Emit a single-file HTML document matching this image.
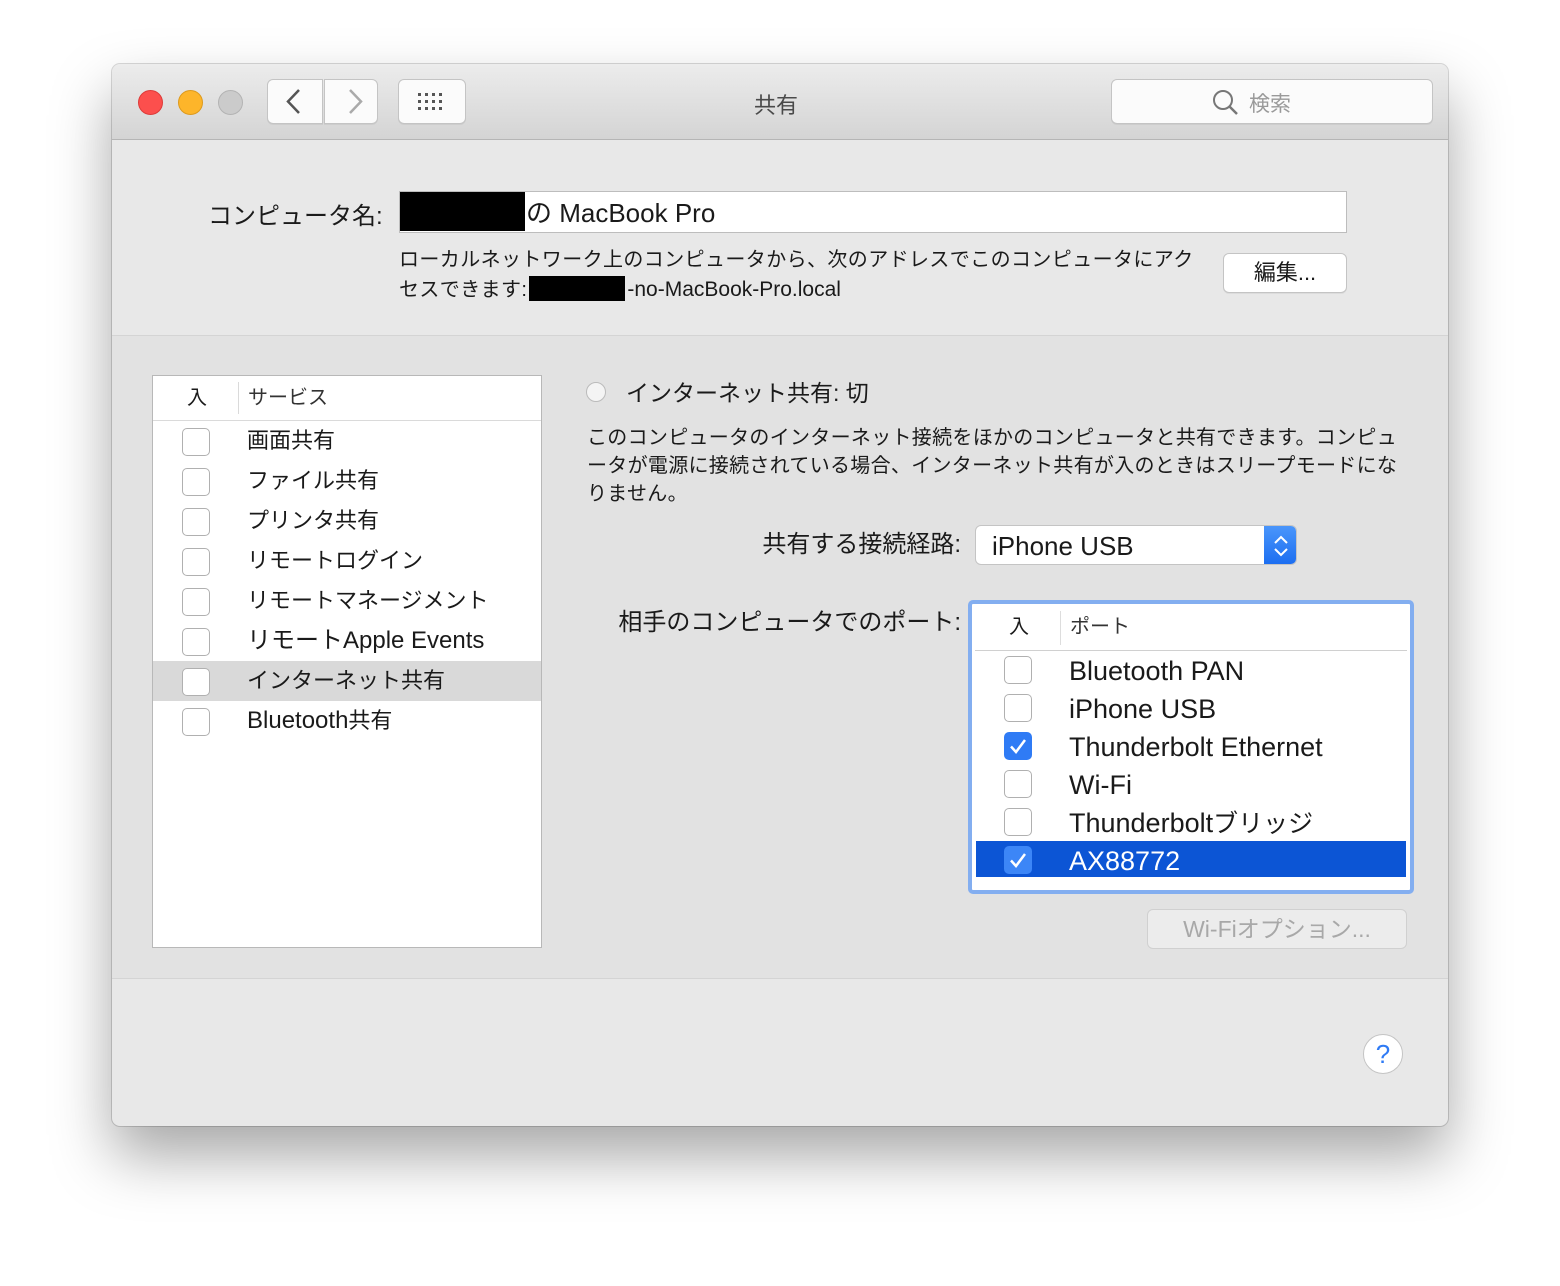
<!DOCTYPE html>
<html><head><meta charset="utf-8"><style>
*{margin:0;padding:0;box-sizing:border-box}
body{width:1560px;height:1286px;background:#fff;position:relative;overflow:hidden;font-family:"Liberation Sans","Noto Sans CJK JP",sans-serif;color:#1a1a1a}
.a{position:absolute}
.win{left:112px;top:64px;width:1336px;height:1062px;background:#e8e8e8;border-radius:8px;box-shadow:0 30px 60px rgba(0,0,0,.35),0 0 0 1px rgba(0,0,0,.15);overflow:hidden}
.tb{left:0;top:0;width:1336px;height:76px;background:linear-gradient(#ececec,#d4d4d4);border-bottom:1px solid #b5b5b5}
.dot{width:25px;height:25px;border-radius:50%;top:26px}
.btn{background:#fbfbfb;border:1px solid #c4c4c4;border-radius:6px;box-shadow:0 1px 0 rgba(0,0,0,.05)}
.cb{width:28px;height:28px;border:1px solid #b0b0b0;border-radius:5px;background:#fff}
.cbc{width:28px;height:28px;border-radius:5px;background:#2f7bf5}
.l{font-size:22px;line-height:30px;left:135px}
.p{font-size:27px;line-height:30px;left:957px}
</style></head><body>
<div class="a win">
 <div class="a tb">
  <div class="a dot" style="left:26px;background:#fc4f4d;border:1px solid #dd3b39"></div>
  <div class="a dot" style="left:66px;background:#fdb52a;border:1px solid #dd9a1d"></div>
  <div class="a dot" style="left:106px;background:#cbcbcb;border:1px solid #b3b3b3"></div>
  <div class="a btn" style="left:155px;top:15px;width:56px;height:45px;border-radius:6px 0 0 6px"></div>
  <div class="a btn" style="left:212px;top:15px;width:54px;height:45px;border-radius:0 6px 6px 0"></div>
  <svg class="a" style="left:155px;top:15px" width="112" height="45"><path d="M32 11 L21 22.5 L32 34" stroke="#555" stroke-width="2.5" fill="none"/><path d="M83 11 L94 22.5 L83 34" stroke="#aaa" stroke-width="2.5" fill="none"/></svg>
  <div class="a btn" style="left:286px;top:15px;width:68px;height:45px"></div>
  <svg class="a" style="left:306px;top:29px" width="30" height="20"><g fill="#555"><rect x="0" y="0" width="3" height="3"/><rect x="7" y="0" width="3" height="3"/><rect x="14" y="0" width="3" height="3"/><rect x="21" y="0" width="3" height="3"/><rect x="0" y="7" width="3" height="3"/><rect x="7" y="7" width="3" height="3"/><rect x="14" y="7" width="3" height="3"/><rect x="21" y="7" width="3" height="3"/><rect x="0" y="14" width="3" height="3"/><rect x="7" y="14" width="3" height="3"/><rect x="14" y="14" width="3" height="3"/><rect x="21" y="14" width="3" height="3"/></g></svg>
  <div class="a" style="left:642px;top:24px;font-size:22px;color:#4a4a4a">共有</div>
  <div class="a btn" style="left:999px;top:15px;width:322px;height:45px"></div>
  <svg class="a" style="left:1100px;top:25px" width="28" height="28"><circle cx="11" cy="11" r="9" stroke="#777" stroke-width="2" fill="none"/><path d="M17.5 17.5 L25 25" stroke="#777" stroke-width="2.5"/></svg>
  <div class="a" style="left:1137px;top:24px;font-size:21px;color:#9a9a9a">検索</div>
 </div>
 <div class="a" style="left:96px;top:132px;font-size:24px">コンピュータ名:</div>
 <div class="a" style="left:287px;top:127px;width:948px;height:42px;background:#fff;border:1px solid #bdbdbd"></div>
 <div class="a" style="left:288px;top:128px;width:125px;height:39px;background:#000"></div>
 <div class="a" style="left:414px;top:134px;font-size:26px;line-height:30px">の MacBook Pro</div>
 <div class="a" style="left:287px;top:182px;font-size:20px;line-height:29px;letter-spacing:.4px">ローカルネットワーク上のコンピュータから、次のアドレスでこのコンピュータにアク<br>セスできます:<span style="display:inline-block;width:96px;height:25px;background:#000;vertical-align:-5px;margin:0 2px"></span><span style="font-size:21px;letter-spacing:0">-no-MacBook-Pro.local</span></div>
 <div class="a btn" style="left:1111px;top:189px;width:124px;height:40px;text-align:center;font-size:22px;line-height:38px;background:#fff">編集...</div>
 <div class="a" style="left:0;top:271px;width:1336px;height:644px;background:#e2e2e2;border-top:1px solid #d4d4d4;border-bottom:1px solid #d4d4d4"></div>
 <div class="a" style="left:40px;top:311px;width:390px;height:573px;background:#fff;border:1px solid #b8b8b8"></div>
 <div class="a" style="left:41px;top:312px;width:388px;height:45px;border-bottom:1px solid #dadada"></div>
 <div class="a" style="left:126px;top:318px;width:1px;height:32px;background:#dadada"></div>
 <div class="a" style="left:75px;top:320px;font-size:20px;line-height:28px">入</div>
 <div class="a" style="left:136px;top:320px;font-size:20px;line-height:28px;color:#333">サービス</div>
 <div class="a" style="left:41px;top:597px;width:388px;height:40px;background:#d9d9d9"></div>
 <div class="a cb" style="left:70px;top:364px"></div><div class="a l" style="top:362px">画面共有</div>
 <div class="a cb" style="left:70px;top:404px"></div><div class="a l" style="top:402px">ファイル共有</div>
 <div class="a cb" style="left:70px;top:444px"></div><div class="a l" style="top:442px">プリンタ共有</div>
 <div class="a cb" style="left:70px;top:484px"></div><div class="a l" style="top:482px">リモートログイン</div>
 <div class="a cb" style="left:70px;top:524px"></div><div class="a l" style="top:522px">リモートマネージメント</div>
 <div class="a cb" style="left:70px;top:564px"></div><div class="a l" style="top:562px"><span style="font-size:24px">リモートApple Events</span></div>
 <div class="a cb" style="left:70px;top:604px"></div><div class="a l" style="top:602px">インターネット共有</div>
 <div class="a cb" style="left:70px;top:644px"></div><div class="a l" style="top:642px"><span style="font-size:24px">Bluetooth</span>共有</div>
 <div class="a" style="left:474px;top:318px;width:20px;height:20px;border-radius:50%;border:1px solid #bbb;background:#f4f4f4"></div>
 <div class="a" style="left:514px;top:314px;font-size:23px;line-height:30px">インターネット共有: 切</div>
 <div class="a" style="left:475px;top:360px;font-size:20px;line-height:28px;width:850px;letter-spacing:.3px">このコンピュータのインターネット接続をほかのコンピュータと共有できます。コンピュ<br>ータが電源に接続されている場合、インターネット共有が入のときはスリープモードにな<br>りません。</div>
 <div class="a" style="left:400px;width:449px;text-align:right;top:466px;font-size:24px;line-height:30px">共有する接続経路:</div>
 <div class="a" style="left:863px;top:461px;width:322px;height:40px;background:#fff;border:1px solid #c4c4c4;border-radius:6px;overflow:hidden">
  <div class="a" style="left:16px;top:5px;font-size:26px;line-height:30px">iPhone USB</div>
  <div class="a" style="left:288px;top:0;width:34px;height:40px;background:linear-gradient(#4a96fb,#1a6cf0)"></div>
  <svg class="a" style="left:295px;top:6px" width="20" height="28"><path d="M4 11 L10 5 L16 11 M4 17 L10 23 L16 17" stroke="#fff" stroke-width="2" fill="none"/></svg>
 </div>
 <div class="a" style="left:400px;width:449px;text-align:right;top:544px;font-size:24px;line-height:30px">相手のコンピュータでのポート:</div>
 <div class="a" style="left:856px;top:536px;width:446px;height:294px;border:4px solid #83aef0;border-radius:5px;background:#fff"></div>
 <div class="a" style="left:863px;top:543px;width:432px;height:44px;border-bottom:1px solid #d0d0d0"></div>
 <div class="a" style="left:948px;top:547px;width:1px;height:34px;background:#ddd"></div>
 <div class="a" style="left:897px;top:549px;font-size:20px;line-height:28px">入</div>
 <div class="a" style="left:958px;top:549px;font-size:20px;line-height:28px;color:#333">ポート</div>
 <div class="a cb" style="left:892px;top:592px"></div><div class="a p" style="top:592px">Bluetooth PAN</div>
 <div class="a cb" style="left:892px;top:630px"></div><div class="a p" style="top:630px">iPhone USB</div>
 <div class="a cbc" style="left:892px;top:668px"><svg width="28" height="28"><path d="M7 14.5 L12 20 L21 8" stroke="#fff" stroke-width="2.5" fill="none"/></svg></div><div class="a p" style="top:668px">Thunderbolt Ethernet</div>
 <div class="a cb" style="left:892px;top:706px"></div><div class="a p" style="top:706px">Wi-Fi</div>
 <div class="a cb" style="left:892px;top:744px"></div><div class="a p" style="top:744px">Thunderbolt<span style="font-size:25px">ブリッジ</span></div>
 <div class="a" style="left:864px;top:777px;width:430px;height:36px;background:#0c55d5"></div>
 <div class="a cbc" style="left:892px;top:782px;background:#3c86f7"><svg width="28" height="28"><path d="M7 14.5 L12 20 L21 8" stroke="#fff" stroke-width="2.5" fill="none"/></svg></div><div class="a p" style="top:782px;color:#fff">AX88772</div>
 <div class="a" style="left:1035px;top:845px;width:260px;height:40px;border:1px solid #d0d0d0;border-radius:6px;background:#ececec;text-align:center;font-size:23px;line-height:38px;color:#a8a8a8">Wi-Fiオプション...</div>
 <div class="a" style="left:1251px;top:970px;width:40px;height:40px;border-radius:50%;background:#fff;border:1px solid #c4c4c4;text-align:center;font-size:26px;line-height:38px;color:#2f7bf5">?</div>
</div>
</body></html>
